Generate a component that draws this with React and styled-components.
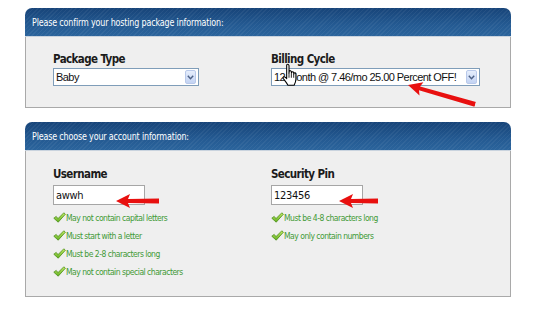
import React from "react";
import styled, { createGlobalStyle } from "styled-components";

const GlobalStyle = createGlobalStyle`
  html, body {
    margin: 0;
    padding: 0;
    background: #fff;
  }
  body {
    width: 533px;
    height: 314px;
    overflow: hidden;
    font-family: "Liberation Sans", Arial, sans-serif;
  }
`;

const usernameRules = [
  "May not contain capital letters",
  "Must start with a letter",
  "Must be 2-8 characters long",
  "May not contain special characters",
];
const pinRules = ["Must be 4-8 characters long", "May only contain numbers"];

const Check = () => (
  <svg width="13" height="11" viewBox="0 0 13 11">
    <defs>
      <linearGradient id="chk" x1="0" y1="0" x2="0" y2="1">
        <stop offset="0" stopColor="#c8ec6a" />
        <stop offset="1" stopColor="#5fae1e" />
      </linearGradient>
    </defs>
    <path
      d="M0.8 6.2 L3.2 4.4 L5 6.6 L10.8 0.8 L12.4 2.2 L5.2 10.2 Z"
      fill="url(#chk)"
      stroke="#4c8f1c"
      strokeWidth="0.8"
      strokeLinejoin="round"
    />
  </svg>
);

const Chevron = () => (
  <svg width="7" height="5" viewBox="0 0 7 5">
    <path d="M0.8 0.8 L3.5 3.8 L6.2 0.8" fill="none" stroke="#4d6185" strokeWidth="1.4" />
  </svg>
);

const Arrow = ({ length, angle }) => (
  <svg
    width={length}
    height="16"
    viewBox={`0 0 ${length} 16`}
    style={{ transform: `rotate(${angle}deg)`, transformOrigin: "0 8px" }}
  >
    <path d={`M0 8 L14 1 L12 6 L${length} 5.5 L${length} 10.5 L12 10 L14 15 Z`} fill="#e8100f" />
  </svg>
);

const Hand = () => (
  <svg width="17" height="24" viewBox="0 0 16 22">
    <path
      d="M4.5 1.2 C5.5 0.6 6.5 1 6.6 2.2 L6.6 9 L6.8 7.6 C7.2 6.6 8.6 6.7 8.8 7.8 L8.9 9.2 L9.2 8.4 C9.7 7.6 10.9 7.8 11 8.8 L11.1 10 L11.4 9.3 C11.9 8.7 13 8.9 13.1 9.9 L13.1 15 C13 17.5 12.2 19 11.4 20.6 L5.6 20.6 C4.6 18.8 3.2 17 1.4 14.6 C0.6 13.4 1.2 12.4 2.2 12.6 C3 12.8 3.8 13.8 4.4 14.4 L4.4 2.2 Z"
      fill="#fff"
      stroke="#000"
      strokeWidth="1"
      strokeLinejoin="round"
    />
    <path d="M8.8 9.4 L8.8 13.6 M11 10 L11 13.6 M6.6 9 L6.6 13.6" stroke="#000" strokeWidth="0.8" />
  </svg>
);

const Page = styled.div`
  padding: 8px 22px 0 25px;
  display: flex;
  flex-direction: column;
  gap: 14px;
`;

const Panel = styled.section`
  position: relative;
`;

const PanelHeader = styled.div`
  height: 28px;
  border-radius: 7px 7px 0 0;
  background:
    repeating-linear-gradient(135deg, rgba(255, 255, 255, 0.05) 0 1px, transparent 1px 3px),
    linear-gradient(#174479, #245a92 60%, #2b649c);
  display: flex;
  align-items: center;
  padding-left: 7px;
  border-bottom: 1px solid #c9d3de;
`;

const HeaderTitle = styled.span`
  color: #fff;
  font-family: "DejaVu Sans", sans-serif;
  font-size: 10.5px;
  letter-spacing: -0.2px;
  white-space: nowrap;
  display: inline-block;
  transform: scaleX(0.76);
  transform-origin: left center;
`;

const PanelBody = styled.div`
  height: ${({ $height }) => $height}px;
  box-sizing: border-box;
  background: #efefef;
  border: 1px solid #a9a9a9;
  border-top: none;
  padding: ${({ $top }) => $top}px 0 0 27px;
  display: grid;
  grid-template-columns: 218px 1fr;
  align-items: start;
`;

const Field = styled.div`
  display: flex;
  flex-direction: column;
  position: relative;
`;

const Label = styled.div`
  font-family: "DejaVu Sans", sans-serif;
  font-stretch: condensed;
  font-weight: bold;
  font-size: 11.5px;
  letter-spacing: -0.6px;
  color: #1b1b1b;
  line-height: 14px;
  margin-bottom: ${({ $gap }) => $gap}px;
`;

const Select = styled.div`
  width: ${({ $width }) => $width}px;
  height: 18px;
  box-sizing: border-box;
  background: #fff;
  border: 1px solid #7f9db9;
  display: flex;
  align-items: center;
  justify-content: space-between;
  font-size: 11px;
  letter-spacing: -0.55px;
  color: #111;
  padding-left: 2px;
  white-space: nowrap;
  overflow: hidden;
`;

const DropButton = styled.span`
  width: 11px;
  height: 14px;
  margin-right: 2px;
  flex: none;
  background: linear-gradient(#e6eefc, #c3d3f3);
  border: 1px solid #b9c9ea;
  border-radius: 2px;
  display: flex;
  align-items: center;
  justify-content: center;
  box-sizing: border-box;
`;

const TextInput = styled.div`
  width: ${({ $width }) => $width}px;
  height: 20px;
  box-sizing: border-box;
  background: #fff;
  border: 1px solid #a6a6a6;
  display: flex;
  align-items: center;
  padding-left: 2px;
  font-family: "DejaVu Sans", sans-serif;
  font-stretch: condensed;
  font-size: 11px;
  letter-spacing: -0.3px;
  color: #111;
`;

const Rules = styled.ul`
  list-style: none;
  margin: 6px 0 0;
  padding: 0;
  display: flex;
  flex-direction: column;
  gap: 5px;
`;

const Rule = styled.li`
  display: flex;
  align-items: center;
  height: 13px;
  font-family: "DejaVu Sans", sans-serif;
  font-stretch: condensed;
  font-size: 8.5px;
  letter-spacing: -0.5px;
  color: #3f9a36;
`;

const Overlay = styled.div`
  position: absolute;
  left: ${({ $x }) => $x}px;
  top: ${({ $y }) => $y}px;
  line-height: 0;
`;

export default function App() {
  return (
    <>
      <GlobalStyle />
      <Page>
        <Panel>
          <PanelHeader>
            <HeaderTitle>Please confirm your hosting package information:</HeaderTitle>
          </PanelHeader>
          <PanelBody $height={71} $top={15}>
            <Field>
              <Label $gap={2}>Package Type</Label>
              <Select $width={146}>
                Baby
                <DropButton>
                  <Chevron />
                </DropButton>
              </Select>
            </Field>
            <Field>
              <Label $gap={2}>Billing Cycle</Label>
              <Select $width={209}>
                12 Month @ 7.46/mo 25.00 Percent OFF!
                <DropButton>
                  <Chevron />
                </DropButton>
              </Select>
              <Overlay $x={11} $y={11}>
                <Hand />
              </Overlay>
              <Overlay $x={137} $y={25}>
                <Arrow length={70} angle={16} />
              </Overlay>
            </Field>
          </PanelBody>
        </Panel>
        <Panel>
          <PanelHeader>
            <HeaderTitle>Please choose your account information:</HeaderTitle>
          </PanelHeader>
          <PanelBody $height={146} $top={16}>
            <Field>
              <Label $gap={4}>Username</Label>
              <TextInput $width={92}>awwh</TextInput>
              <Overlay $x={63} $y={26}>
                <Arrow length={43} angle={0} />
              </Overlay>
              <Rules>
                {usernameRules.map((r) => (
                  <Rule key={r}>
                    <Check />
                    {r}
                  </Rule>
                ))}
              </Rules>
            </Field>
            <Field>
              <Label $gap={4}>Security Pin</Label>
              <TextInput $width={92}>123456</TextInput>
              <Overlay $x={68} $y={26}>
                <Arrow length={39} angle={0} />
              </Overlay>
              <Rules>
                {pinRules.map((r) => (
                  <Rule key={r}>
                    <Check />
                    {r}
                  </Rule>
                ))}
              </Rules>
            </Field>
          </PanelBody>
        </Panel>
      </Page>
    </>
  );
}
